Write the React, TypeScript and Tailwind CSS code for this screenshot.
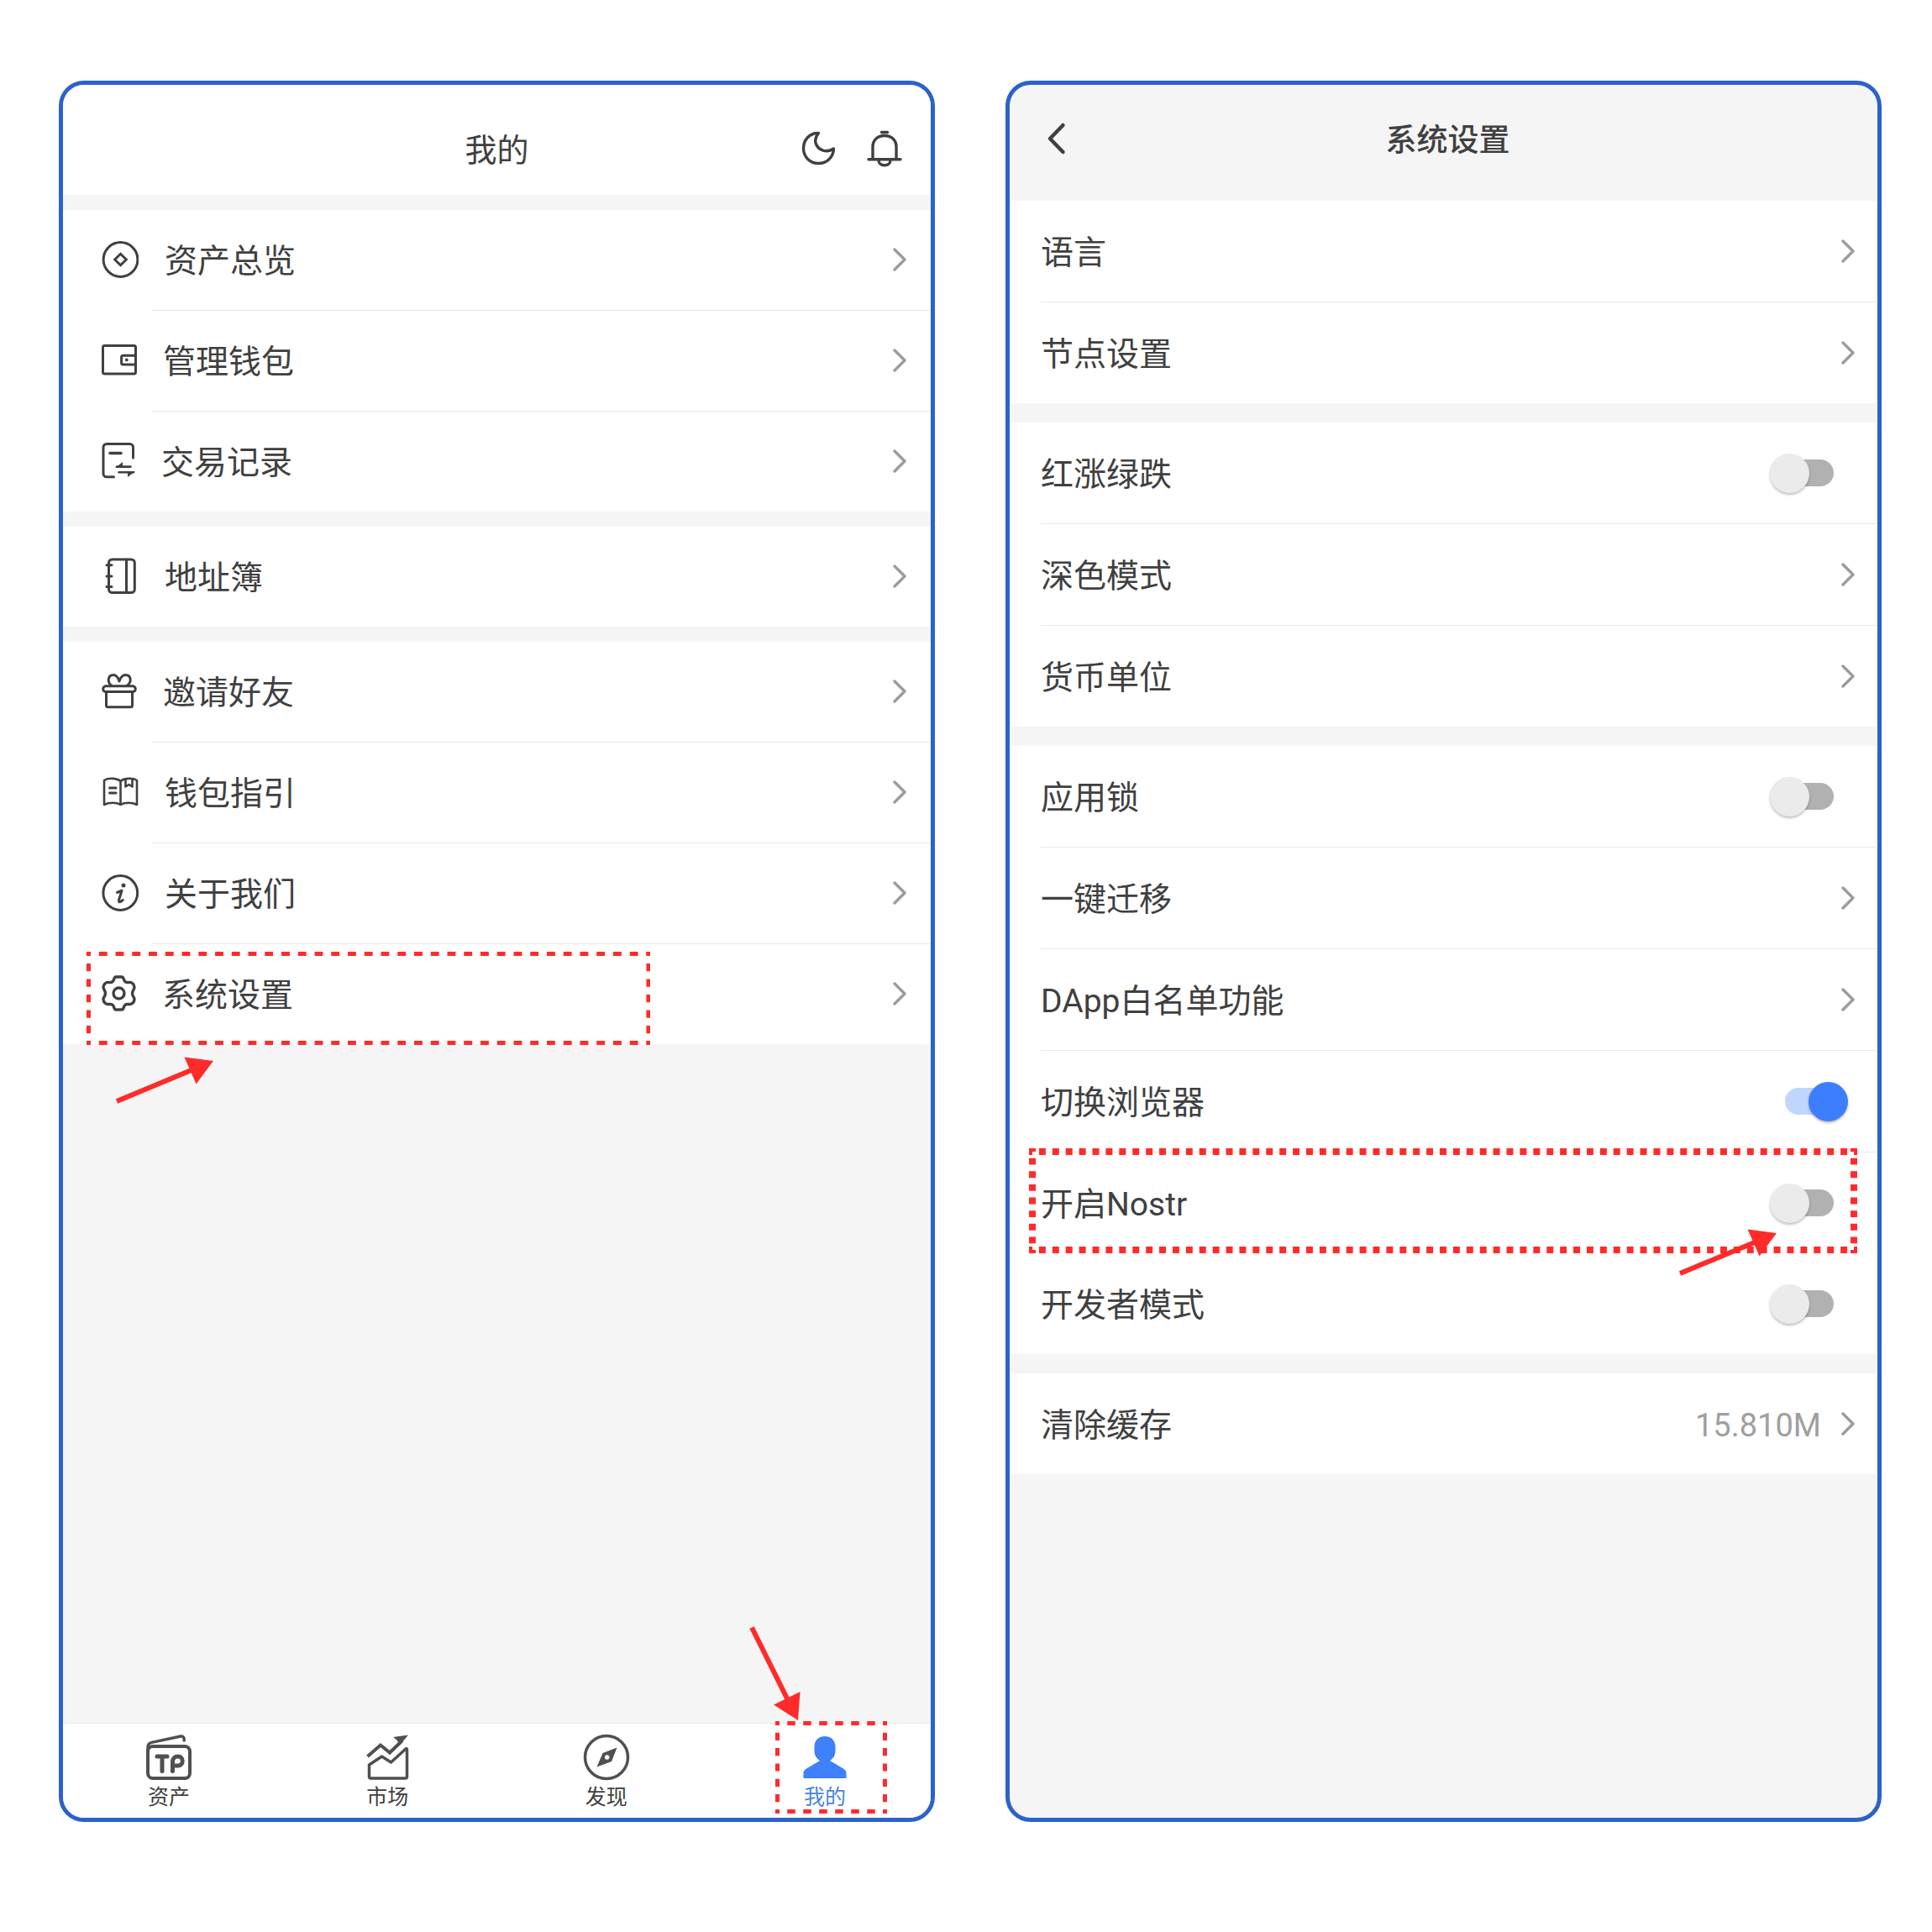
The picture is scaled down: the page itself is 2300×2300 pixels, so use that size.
import React from "react";

const INK = "#404040";

type IconProps = { children: React.ReactNode; width: number; height?: number; strokeWidth?: number };

function Icon({ children, width, height = 44, strokeWidth = 3 }: IconProps) {
  return (
    <svg
      width={width}
      height={height}
      viewBox={`0 0 ${width} ${height}`}
      fill="none"
      stroke="currentColor"
      strokeWidth={strokeWidth}
      strokeLinecap="round"
      strokeLinejoin="round"
      className="shrink-0"
      aria-hidden="true"
    >
      {children}
    </svg>
  );
}

const OverviewIcon = () => (
  <Icon width={44}>
    <circle cx="22.5" cy="22" r="20.4" />
    <path d="M22.5 15.3l6.8 6.7-6.8 6.7-6.8-6.7z" strokeLinejoin="miter" />
  </Icon>
);

const WalletIcon = () => (
  <Icon width={42}>
    <rect x="1.5" y="4.5" width="39" height="33.6" rx="2" />
    <path d="M40.5 16.3H25.6a2 2 0 0 0-2 2v6.8a2 2 0 0 0 2 2h14.9" />
    <circle cx="29.8" cy="21.4" r="1.9" fill="currentColor" stroke="none" />
  </Icon>
);

const RecordsIcon = () => (
  <Icon width={40}>
    <path d="M14.5 40.8H6a4 4 0 0 1-4-4V5.5a4 4 0 0 1 4-4h27.500a4 4 0 0 1 4 4V18" />
    <path d="M10 12.6h13" strokeWidth="3.5" />
    <path d="M18 28.6h16.500M20.500 35.2H38" strokeWidth="2.600" />
    <path d="M16 29.900l9-7v7zM40 33.900l-9 7v-7z" fill="currentColor" stroke="none" />
  </Icon>
);

const AddressBookIcon = () => (
  <Icon width={44}>
    <rect x="8.5" y="2" width="30.800" height="39.600" rx="4" />
    <path d="M29.500 2v39.600M6 8.800h6M6 22h6M6 34.600h6" />
  </Icon>
);

const GiftIcon = () => (
  <Icon width={42}>
    <rect x="1.700" y="15.800" width="38.600" height="6.800" rx="3.400" />
    <path d="M5.500 22.800v16a2 2 0 0 0 2 2h27a2 2 0 0 0 2-2v-16" />
    <path d="M12 15.500C6 11 7.500 2.500 14 2.500c4 0 5.500 3 7 7.500 1.500-4.500 3.500-7.500 7.500-7.500 6.500 0 8 8.500 1.500 13" />
  </Icon>
);

const GuideIcon = () => (
  <Icon width={44} strokeWidth={2.600}>
    <path d="M22.500 9c-4-3.500-14-4.500-19.500-1V37c5.500-3 15-3 19.500 0 4.500-3 14-3 19.500 0V8c-5.500-3.500-15.500-2.500-19.500 1zM22.500 9v28" />
    <path d="M9.500 17h7.500M9.500 23h7.500" strokeWidth="3" />
    <path d="M28.500 7v8.500l4-2.500 4 2.500V7" />
  </Icon>
);

const InfoIcon = () => (
  <Icon width={44}>
    <circle cx="22.300" cy="22" r="20.400" />
    <circle cx="26" cy="13" r="2.500" fill="currentColor" stroke="none" />
    <path d="M18.500 21.500l5.500-2.300-3.500 11.300c-.5 2 .5 2.800 2.300 1.800l2.500-1.800" />
  </Icon>
);

const GearIcon = () => (
  <Icon width={41} strokeWidth={3.400}>
    <path d="M17 2h7q1.500 0 2.200 2.500C27 7.500 29.500 9 32.500 8.500 36 7.800 39 11 39 14.500 39 16.500 36.500 18 36.500 21.500S39 26.500 39 28.500C39 32 36 35.200 32.500 34.500 29.500 34 27 35.500 26.200 38.500Q25.500 41 24 41h-7q-1.500 0-2.200-2.500C14 35.500 11.500 34 8.500 34.500 5 35.200 2 32 2 28.500 2 26.500 4.500 25 4.500 21.500S2 16.500 2 14.500C2 11 5 7.800 8.500 8.500 11.500 9 14 7.500 14.800 4.500Q15.500 2 17 2z" />
    <circle cx="20.500" cy="21.500" r="6.500" />
  </Icon>
);

function Chevron() {
  return (
    <svg width="16" height="28" viewBox="0 0 16 28" fill="none" stroke="#9c9c9c" strokeWidth="3.400" strokeLinecap="round" strokeLinejoin="round" className="shrink-0" aria-hidden="true">
      <path d="M2 2l12 12L2 26" />
    </svg>
  );
}

/* Strokes are twice as thick as they show: the svg clips the outer half. */
function DashedBox({ className, across, down, thickness }: { className: string; across: number; down: number; thickness: number }) {
  const common = { stroke: "#ff2b2b", strokeWidth: thickness * 2, strokeDasharray: "10 10", strokeDashoffset: 5 };
  return (
    <svg className={`pointer-events-none absolute overflow-hidden ${className}`} aria-hidden="true">
      <line x1="0" y1="0" x2="100%" y2="0" pathLength={across * 20} {...common} />
      <line x1="0" y1="100%" x2="100%" y2="100%" pathLength={across * 20} {...common} />
      <line x1="0" y1="0" x2="0" y2="100%" pathLength={down * 20} {...common} />
      <line x1="100%" y1="0" x2="100%" y2="100%" pathLength={down * 20} {...common} />
    </svg>
  );
}

function ArrowRight({ className }: { className: string }) {
  return (
    <svg width="120" height="60" viewBox="0 0 120 60" className={`pointer-events-none absolute z-10 ${className}`} aria-hidden="true">
      <path d="M2 56L92 18.500" stroke="#ff2b2b" strokeWidth="6" />
      <path d="M117 8L82.500 3.500l14 32z" fill="#ff2b2b" />
    </svg>
  );
}

function ArrowDown({ className }: { className: string }) {
  return (
    <svg width="64" height="118" viewBox="0 0 64 118" className={`pointer-events-none absolute ${className}`} aria-hidden="true">
      <path d="M5 3.500L49 92" stroke="#ff2b2b" strokeWidth="6" />
      <path d="M60 114L31 95.500l31.500-15.500z" fill="#ff2b2b" />
    </svg>
  );
}

function Screen({ label, children }: { label: string; children: React.ReactNode }) {
  return (
    <section aria-label={label} className="flex min-w-0 flex-1 flex-col overflow-hidden rounded-[30px] border-[5px] border-[#2c62c9] bg-[#f5f5f5]">
      {children}
    </section>
  );
}

type MenuItem = { label: string; icon: React.ReactNode; marked?: boolean };

const menuGroups: MenuItem[][] = [
  [
    { label: "资产总览", icon: <OverviewIcon /> },
    { label: "管理钱包", icon: <WalletIcon /> },
    { label: "交易记录", icon: <RecordsIcon /> },
  ],
  [{ label: "地址簿", icon: <AddressBookIcon /> }],
  [
    { label: "邀请好友", icon: <GiftIcon /> },
    { label: "钱包指引", icon: <GuideIcon /> },
    { label: "关于我们", icon: <InfoIcon /> },
    { label: "系统设置", icon: <GearIcon />, marked: true },
  ],
];

function MenuGroup({ items }: { items: MenuItem[] }) {
  return (
    <ul className="bg-white">
      {items.map((item, i) => (
        <li key={item.label} className="relative">
          {i > 0 && <div className="ml-[106px] h-px bg-[#e9e9e9]" />}
          <button type="button" className="flex h-[119px] w-full items-center gap-[31px] pr-[29px] pb-0.5 pl-[46px] text-left">
            {item.icon}
            <span className="flex-1 pt-1 text-[39px] leading-[48px]">{item.label}</span>
            <Chevron />
          </button>
          {item.marked && (
            <>
              <DashedBox className="top-[10px] left-7 h-[111px] w-[65%]" across={34} down={6} thickness={5} />
              <ArrowRight className="top-[132px] left-[62px]" />
            </>
          )}
        </li>
      ))}
    </ul>
  );
}

function Tab({ label, active, children }: { label: string; active?: boolean; children: React.ReactNode }) {
  return (
    <button
      type="button"
      aria-current={active ? "page" : undefined}
      className={`flex w-20 flex-col items-center gap-1 pt-3 ${active ? "text-[#3f80fb]" : "text-[#505050]"}`}
    >
      {children}
      <span className={`text-[25px] leading-8 ${active ? "text-[#4a86dc]" : "text-[#404040]"}`}>{label}</span>
    </button>
  );
}

function ProfileScreen() {
  return (
    <Screen label="我的">
      <header className="relative flex h-[131px] items-center justify-center bg-white pt-6">
        <h1 className="text-[38px] leading-[48px]">我的</h1>
        <div className="absolute right-[34px] flex gap-[38px] pb-1">
          <button type="button" aria-label="深色模式">
            <Icon width={40} strokeWidth={3.400}>
              <path d="M20.500 3.500C9.500 3 2.500 12 2.500 21.500 2.500 32 10.500 39.500 20.500 39.500c9.500 0 17.500-7 18-17.500C30 27.500 20.500 24 17.500 16.500 15.800 12 17 7.500 20.500 3.500z" />
            </Icon>
          </button>
          <button type="button" aria-label="通知">
            <Icon width={42} strokeWidth={3.400}>
              <path d="M17.500 2.500h7M7 34.500V20C7 11.500 13 6.500 21 6.500S35 11.500 35 20v14.500M2 34.800h38M14 35.500c0 4 3 6.300 7 6.300s7-2.300 7-6.300" />
            </Icon>
          </button>
        </div>
      </header>
      <main className="flex flex-1 flex-col gap-[18px] pt-[18px]">
        {menuGroups.map((items) => (
          <MenuGroup key={items[0].label} items={items} />
        ))}
      </main>
      <nav className="flex h-[113px] items-start justify-between border-t border-[#ebebeb] bg-white px-[86px]">
        <Tab label="资产">
          <Icon width={56} height={56} strokeWidth={4}>
            <rect x="3" y="15" width="50" height="38" rx="6" />
            <path d="M3 20v-4c0-3 1.500-5 4.500-5.600L42 3c2.500-.5 4 .8 4.200 3.500V8" strokeWidth="3.500" />
            <path d="M14 27h12M20 27v17.500" strokeWidth="5" />
            <path d="M32.500 44.500V33a6 6 0 0 1 6-6h.5a5.200 5.200 0 0 1 5.200 5.200v.6A5.200 5.200 0 0 1 39 38h-3" strokeWidth="5" />
          </Icon>
        </Tab>
        <Tab label="市场">
          <Icon width={56} height={56} strokeWidth={3.500}>
            <path d="M4.500 27L20 13.500 31 22.500 46 8" strokeWidth="4" strokeLinecap="butt" strokeLinejoin="miter" />
            <path d="M53 1.500L35 4l4.500 3.500 3.500 6z" fill="currentColor" stroke="none" />
            <path d="M6.500 37L21.500 27 32.500 34 50 18q1.500-1 1.500 1V51a2 2 0 0 1-2 2h-41a2 2 0 0 1-2-2z" />
          </Icon>
        </Tab>
        <Tab label="发现">
          <Icon width={56} height={56} strokeWidth={3.500}>
            <circle cx="28" cy="28" r="25.500" />
            <path fillRule="evenodd" d="M40.500 16.500L34 33 16.500 39.500 23.500 23zM28.700 25.200a2.800 2.800 0 1 0 .01 0z" fill="currentColor" stroke="none" />
          </Icon>
        </Tab>
        <div className="relative">
          <Tab label="我的" active>
            <Icon width={56} height={56}>
              <path
                d="M28 3c8 0 12.500 5.500 12.500 12.500v5c0 5-2.500 9-6.500 11.500l16 9.500c2.500 1.500 3.500 3 3.500 5.500v6H2.500v-6c0-2.500 1-4 3.500-5.500L22 32c-4-2.500-6.500-6.500-6.500-11.500v-5C15.500 8.500 20 3 28 3z"
                fill="currentColor"
                stroke="none"
              />
            </Icon>
          </Tab>
          <DashedBox className="-top-[3px] -left-[19px] h-[110px] w-[133px]" across={7} down={6} thickness={5} />
          <ArrowDown className="-top-[118px] -left-[52px]" />
        </div>
      </nav>
    </Screen>
  );
}

type Setting = { label: string; kind: "link" | "off" | "on"; value?: string; marked?: boolean; noLine?: boolean };

const settingGroups: Setting[][] = [
  [
    { label: "语言", kind: "link" },
    { label: "节点设置", kind: "link" },
  ],
  [
    { label: "红涨绿跌", kind: "off" },
    { label: "深色模式", kind: "link" },
    { label: "货币单位", kind: "link" },
  ],
  [
    { label: "应用锁", kind: "off" },
    { label: "一键迁移", kind: "link" },
    { label: "DApp白名单功能", kind: "link" },
    { label: "切换浏览器", kind: "on" },
    { label: "开启Nostr", kind: "off", marked: true },
    { label: "开发者模式", kind: "off", noLine: true },
  ],
  [{ label: "清除缓存", kind: "link", value: "15.810M" }],
];

function SettingRow({ item }: { item: Setting }) {
  const rowClass = "flex h-[120px] w-full items-center pl-[37px] text-left";
  const text = <span className="flex-1 pt-1 text-[39px] leading-[48px]">{item.label}</span>;
  if (item.kind === "link") {
    return (
      <button type="button" className={`${rowClass} gap-6 pr-[27px]`}>
        {text}
        {item.value && <span className="pt-1 text-[38px] leading-[48px] text-[#a0a0a0]">{item.value}</span>}
        <Chevron />
      </button>
    );
  }
  return (
    <label className={`${rowClass} ${item.kind === "on" ? "pr-[46px]" : "pr-[52px]"}`}>
      {text}
      <input
        type="checkbox"
        role="switch"
        defaultChecked={item.kind === "on"}
        className="relative h-8 w-16 shrink-0 appearance-none rounded-full bg-[#b1b1b1] before:absolute before:-top-[7px] before:-left-3 before:size-[47px] before:rounded-full before:bg-[#ebebeb] before:shadow-[0_2px_3px_rgba(0,0,0,0.25)] checked:bg-[#c0d6ff] checked:before:left-7 checked:before:bg-[#3d7eff]"
      />
    </label>
  );
}

function SettingsScreen() {
  return (
    <Screen label="系统设置">
      <header className="flex h-[138px] items-center pr-[62px] pb-2.5 pl-10">
        <button type="button" aria-label="返回" className="flex w-8 justify-center">
          <svg width="24" height="40" viewBox="0 0 24 40" fill="none" stroke={INK} strokeWidth="4.500" strokeLinecap="round" strokeLinejoin="round" aria-hidden="true">
            <path d="M19.500 4L4 20l15.500 16" />
          </svg>
        </button>
        <h1 className="flex-1 pt-1.5 text-center text-[37px] leading-[48px] font-medium">系统设置</h1>
      </header>
      <main className="flex flex-1 flex-col gap-[23px]">
        {settingGroups.map((items) => (
          <ul key={items[0].label} className="bg-white">
            {items.map((item, i) => (
              <li key={item.label} className="relative">
                {i > 0 && !item.noLine && <div className="ml-[37px] h-px bg-[#e9e9e9]" />}
                <SettingRow item={item} />
                {item.marked && (
                  <>
                    <DashedBox className="-top-1 left-[23px] h-[125px] w-[calc(100%-47px)]" across={62} down={8} thickness={8} />
                    <ArrowRight className="top-[89px] right-[117px]" />
                  </>
                )}
              </li>
            ))}
          </ul>
        ))}
      </main>
    </Screen>
  );
}

export default function App() {
  return (
    <div className="flex min-h-screen gap-[84px] bg-white pt-24 pr-[60px] pb-[131px] pl-[70px] font-['Roboto','Noto_Sans_CJK_SC',sans-serif] text-[#404040]" lang="zh-CN">
      <ProfileScreen />
      <SettingsScreen />
    </div>
  );
}
